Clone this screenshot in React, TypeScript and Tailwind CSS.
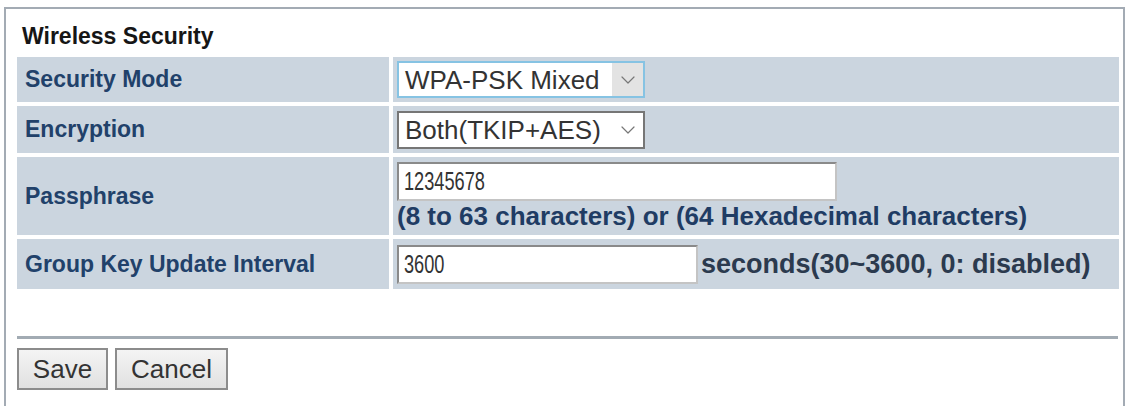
import { ChevronDown } from "lucide-react";

const font = { fontFamily: '"Liberation Sans", Arial, sans-serif' };

function Label({ children }: { children: React.ReactNode }) {
  return (
    <div className="flex items-center bg-[#cbd5df] pl-2 text-[23px] font-bold text-[#21416a]">
      {children}
    </div>
  );
}

function Select({ value, focused }: { value: string; focused?: boolean }) {
  return (
    <div
      className={
        focused
          ? "flex h-[37px] w-[248px] items-center border-2 border-[#86c3e3] bg-white"
          : "flex h-[38px] w-[248px] items-center border-2 border-[#767676] bg-white"
      }
    >
      <span className="flex-1 whitespace-nowrap pl-[6px] text-[26px] leading-none text-[#333]">
        {value}
      </span>
      <span
        className={
          focused
            ? "flex h-full w-[31px] shrink-0 items-center justify-center bg-[#e3e3e3]"
            : "flex h-full w-[31px] shrink-0 items-center justify-center"
        }
      >
        <ChevronDown className="h-6 w-6 text-[#777]" strokeWidth={1.2} />
      </span>
    </div>
  );
}

function TextBox({ value, width }: { value: string; width: string }) {
  return (
    <div
      className={`flex h-[39px] shrink-0 items-center border-2 border-[#8a8a8a] border-b-[#c4c4c4] border-r-[#c4c4c4] bg-white px-[5px] ${width}`}
    >
      <span className="inline-block origin-left scale-x-[0.7] text-[26px] leading-none text-[#333]">
        {value}
      </span>
    </div>
  );
}

export default function App() {
  return (
    <div className="h-[406px] w-[1126px] overflow-hidden bg-white" style={font}>
      <div className="ml-[4px] mt-[7px] h-[400px] w-[1121px] border-x-2 border-t-2 border-[#a3abb4] pl-[11px] pr-[4px]">
        <div className="pb-[5px] pl-[5px] pt-[11px] text-[23px] font-bold leading-[32px] text-[#161616]">
          Wireless Security
        </div>
        <div className="grid grid-cols-[372px_1fr] gap-[4px]">
          <Label>Security Mode</Label>
          <div className="flex h-[45px] items-center bg-[#cbd5df] pl-[4px]">
            <Select value="WPA-PSK Mixed" focused />
          </div>

          <Label>Encryption</Label>
          <div className="flex h-[47px] items-center bg-[#cbd5df] pl-[4px]">
            <Select value="Both(TKIP+AES)" />
          </div>

          <Label>Passphrase</Label>
          <div className="flex h-[78px] flex-col justify-center bg-[#cbd5df] pl-[4px]">
            <TextBox value="12345678" width="w-[440px]" />
            <div className="text-[26px] font-bold leading-[30px] text-[#1f3c64]">
              (8 to 63 characters) or (64 Hexadecimal characters)
            </div>
          </div>

          <Label>Group Key Update Interval</Label>
          <div className="flex h-[50px] items-center bg-[#cbd5df] pl-[4px]">
            <TextBox value="3600" width="w-[301px]" />
            <span className="pl-[3px] text-[27px] font-bold text-[#2b3a4e]">
              seconds(30~3600, 0: disabled)
            </span>
          </div>
        </div>

        <div className="mt-[47px] h-[3px] w-[1101px] bg-[#a2abb3]" />

        <div className="mt-[9px] flex gap-[7px]">
          <button className="h-[42px] w-[91px] border-2 border-[#8c8c8c] bg-gradient-to-b from-[#f4f4f4] to-[#e1e1e1] text-[26px] text-[#333]">
            Save
          </button>
          <button className="h-[42px] w-[113px] border-2 border-[#8c8c8c] bg-gradient-to-b from-[#f4f4f4] to-[#e1e1e1] text-[26px] text-[#333]">
            Cancel
          </button>
        </div>
      </div>
    </div>
  );
}
